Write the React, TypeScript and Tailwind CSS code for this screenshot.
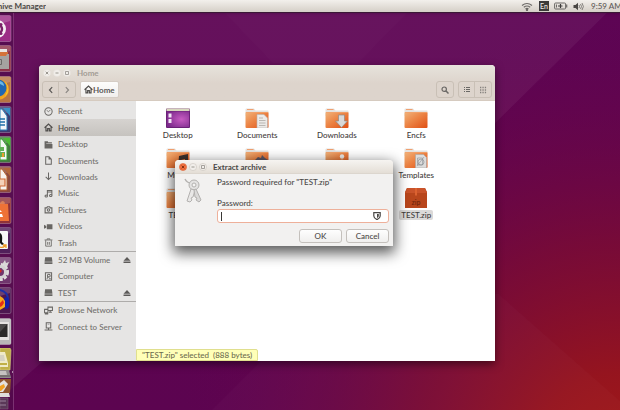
import type { ReactNode } from "react";

const Sym = ({ children }: { children: ReactNode }) => (
  <svg viewBox="0 0 16 16" className="h-[9px] w-[9px] shrink-0" fill="none" stroke="#686663" strokeWidth="1.8">
    {children}
  </svg>
);

const icons = {
  recent: (
    <Sym>
      <circle cx="8" cy="8" r="6.5" />
      <path d="M4.5 5.5 8 8.5l3.5-3.5" strokeWidth="1.4" />
    </Sym>
  ),
  home: (
    <Sym>
      <path d="M1 8.500 8 2l7 6.500M3.500 7.500v6.500h3v-4h3v4h3V7.500" strokeWidth="2.100" stroke="#504e4c" />
    </Sym>
  ),
  folder: (
    <Sym>
      <path d="M1 2h6v2h7v2H4v1h11v8H1z" fill="#686663" stroke="none" />
    </Sym>
  ),
  document: (
    <Sym>
      <path d="M3 1.500h6l4 4v9H3zM9 1.500v4h4" />
    </Sym>
  ),
  download: (
    <Sym>
      <path d="M8 1v12M3 8.500 8 13.500l5-5" />
    </Sym>
  ),
  music: (
    <Sym>
      <path d="M6 12V2.500h8V11M6 5.500h8" />
      <ellipse cx="4" cy="12.500" rx="2.200" ry="1.800" />
      <ellipse cx="12" cy="11.500" rx="2.200" ry="1.800" />
    </Sym>
  ),
  camera: (
    <Sym>
      <path d="M2 5h3l1-2h4l1 2h3v9H2z" strokeWidth="2" />
      <circle cx="8" cy="9" r="2.200" />
    </Sym>
  ),
  video: (
    <Sym>
      <path d="M5 4h10v9H5zM0 5l4 2v3l-4 2z" fill="#686663" stroke="none" />
    </Sym>
  ),
  trash: (
    <Sym>
      <path d="M1 3.500h14M5.500 3V1.500h5V3M3 4v10.500h10V4M6.500 7v5M9.500 7v5" strokeWidth="1.500" />
    </Sym>
  ),
  drive: (
    <Sym>
      <path d="M2 2h12l1 8H1zM1 11h14v3H1z" fill="#686663" stroke="none" />
    </Sym>
  ),
  computer: (
    <Sym>
      <path d="M2.500 1.500h11v13h-11z" />
      <circle cx="8.500" cy="6.500" r="2.500" />
      <path d="M5 12l3-4M9 12h3" />
    </Sym>
  ),
  network: (
    <Sym>
      <path d="M7 2h8v6H7zM1 6h6v6H1zM11 8v3M4 12v2.500M1.500 14h6M9 11h5" />
    </Sym>
  ),
  server: (
    <Sym>
      <path d="M4 1.500h8v9H4zM8 10.500V14M1 14.200h14" />
      <path d="M6.500 4h3" strokeWidth="1" />
    </Sym>
  ),
};

type Place = { label: string; icon: keyof typeof icons; eject?: boolean };

const places: Place[] = [
  { label: "Recent", icon: "recent" },
  { label: "Home", icon: "home" },
  { label: "Desktop", icon: "folder" },
  { label: "Documents", icon: "document" },
  { label: "Downloads", icon: "download" },
  { label: "Music", icon: "music" },
  { label: "Pictures", icon: "camera" },
  { label: "Videos", icon: "video" },
  { label: "Trash", icon: "trash" },
];

const devices: Place[] = [
  { label: "52 MB Volume", icon: "drive", eject: true },
  { label: "Computer", icon: "computer" },
  { label: "TEST", icon: "drive", eject: true },
];

const network: Place[] = [
  { label: "Browse Network", icon: "network" },
  { label: "Connect to Server", icon: "server" },
];

const files = [
  "Desktop",
  "Documents",
  "Downloads",
  "Encfs",
  "Music",
  "Pictures",
  "Public",
  "Templates",
  "TEST",
  "Videos",
  "Examples",
  "TEST.zip",
];

const PlaceRow = ({ place }: { place: Place }) => {
  const active = place.label === "Home";
  return (
    <li
      className={
        active
          ? "flex items-center bg-linear-to-b from-[#d6d3d0] to-[#c6c3bf] pr-[5px] pl-[5px] text-[#4c4a48]"
          : "flex items-center pr-[5px] pl-[5px]"
      }
    >
      <a href="#" className="flex min-w-0 flex-1 items-center gap-[5px] whitespace-nowrap">
        {icons[place.icon]}
        {place.label}
      </a>
      {place.eject && (
        <button type="button" aria-label={"Eject " + place.label}>
          <svg viewBox="0 0 8 8" className="h-2 w-2" fill="#5c5a58">
            <path d="M4 1l3.500 3.700h-7zM.5 5.600h7V7h-7z" />
          </svg>
        </button>
      )}
    </li>
  );
};

const FileIcon = ({ name }: { name: string }) => {
  if (name === "Desktop") {
    return (
      <svg viewBox="0 0 24 20" className="h-5 w-6">
        <rect x="0" y="0.500" width="24" height="19.500" rx="1" fill="#6b2177" />
        <rect x="0.500" y="0.500" width="23" height="2.500" fill="#d8d8bd" />
        <rect x="1" y="3.500" width="22" height="15.500" fill="url(#desk)" />
        <path d="M2.500 5.500h3v4h-3zM2.500 11h3v4h-3z" fill="#f2e6f5" />
      </svg>
    );
  }
  if (name === "TEST.zip") {
    return (
      <svg viewBox="0 0 24 20" className="h-5 w-6">
        <path d="M3 0h18l2 4v16H1V4z" fill="#b8461c" />
        <path d="M3 0h18l2 5H1z" fill="#c9532a" />
        <path d="M11 0h2v8l-1-1-1 1z" fill="#dc6230" />
        <text x="12" y="17" textAnchor="middle" fontSize="7" fill="#6d240b">
          zip
        </text>
      </svg>
    );
  }
  return (
    <svg viewBox="0 0 24 20" className="h-5 w-6">
      <path d="M.5 1.500Q.5.500 1.500.500h7.500l1.500 2H23q.5 0 .5.600V8H.5z" fill="#e6e2de" />
      <path d="M2 1.500h6.500" stroke="#f0a070" strokeWidth="1" />
      <rect x="0.500" y="4" width="23" height="16" rx="1" fill="url(#folder)" />
      <path d="M1 4.500h22" stroke="#f3a26c" strokeWidth="0.800" />
      {name === "Documents" && (
        <>
          <path d="M12 6.500h7l3.500 3.500v10H12z" fill="#eceae8" stroke="#b9b4af" strokeWidth="0.600" />
          <path d="M14 10h4M14 12.500h6.500M14 15h6.500M14 17.500h6.500" stroke="#b5b1ad" strokeWidth="0.900" />
        </>
      )}
      {name === "Downloads" && (
        <path d="M13.500 7h6v6h3l-6 6.500-6-6.500h3z" fill="#d9d9d9" stroke="#8f8a86" strokeWidth="0.700" />
      )}
      {name === "Music" && <path d="M13 8l9-2v12h-3v-7l-4 1v8h-3z" fill="#3b302c" />}
      {name === "Pictures" && <path d="M10 12l3-3 3 1 1-3 3 3 3 2v8H10z" fill="#5d5663" />}
      {name === "Public" && (
        <>
          <circle cx="17" cy="8.500" r="2.200" fill="#eeebe8" />
          <path d="M13.500 19v-6q3.500-3 7 0v6z" fill="#d8d4d0" />
        </>
      )}
      {name === "Templates" && (
        <>
          <path d="M11.500 6.500h8l3 3v10.500h-11z" fill="#dcdcdc" stroke="#a9a6a3" strokeWidth="0.600" />
          <circle cx="17" cy="14" r="3" fill="none" stroke="#8c9096" strokeWidth="0.700" />
          <path d="M13 18l7-9M13.500 10h5v7h-5z" fill="none" stroke="#8c9096" strokeWidth="0.600" />
        </>
      )}
    </svg>
  );
};

// Launcher tiles run off the left edge, so each drawing is the right part of its icon.
const tiles: { name: string; back: string; art: ReactNode }[] = [
  {
    name: "Search",
    back: "#9c2d86",
    art: (
      <>
        <circle cx="-3" cy="14" r="9" fill="#f6eef4" />
        <circle cx="-2" cy="14" r="4" fill="none" stroke="#7b2069" strokeWidth="2.500" />
        <circle cx="1" cy="9.500" r="1.500" fill="#7b2069" />
        <circle cx="1" cy="18.500" r="1.500" fill="#7b2069" />
      </>
    ),
  },
  {
    name: "Files",
    back: "#8e3349",
    art: (
      <>
        <path d="M0 4h7v6H0z" fill="#e9e6e3" />
        <path d="M0 7h8v6H0z" fill="#d4733a" />
        <path d="M0 11h6l1-2h2v15H0z" fill="#a5a3a1" />
        <path d="M0 14.500h1.500v5H0" fill="none" stroke="#6c6a68" />
      </>
    ),
  },
  {
    name: "Firefox",
    back: "#b87443",
    art: (
      <>
        <circle cx="-1" cy="13.500" r="10" fill="#f0a01e" />
        <circle cx="-2" cy="12" r="8.500" fill="#1f67b2" />
        <path d="M5 5q5 8 0 15l-5 3q8-3 8-9t-3-9z" fill="#f7d32d" />
        <path d="M0 5q4 1 4 5l-4-2z" fill="#69b8e6" />
      </>
    ),
  },
  {
    name: "Writer",
    back: "#3e3c72",
    art: (
      <>
        <path d="M0 3h2l5 7v14H0z" fill="#f4f6f8" stroke="#2d7db5" strokeWidth="1" />
        <path d="M3 2h7v8z" fill="#3a8fc5" />
        <path d="M0 13h5M0 16h5M0 19h5" stroke="#1e6fa8" strokeWidth="1.600" />
      </>
    ),
  },
  {
    name: "Calc",
    back: "#467a42",
    art: (
      <>
        <path d="M0 3h2l5 7v14H0z" fill="#f4f8f4" stroke="#3aa335" strokeWidth="1" />
        <path d="M3 2h7v8z" fill="#4dbb35" />
        <path d="M0 11h4v4H0zM0 16h5v5H0z" fill="#62b057" />
        <path d="M2 17h2v4H2z" fill="#e8a02c" />
      </>
    ),
  },
  {
    name: "Impress",
    back: "#8b4a40",
    art: (
      <>
        <path d="M0 3h2l5 7v14H0z" fill="#f8f3ef" stroke="#b5642f" strokeWidth="1" />
        <path d="M3 2h7v8z" fill="#b3673a" />
        <path d="M0 13h5v7H0" fill="#f4d2b8" stroke="#cf6a34" strokeWidth="1.200" />
      </>
    ),
  },
  {
    name: "Software",
    back: "#8f3238",
    art: (
      <>
        <path d="M0 6q3-4 5 0l-1 2H0z" fill="#d9805a" />
        <path d="M0 7h8l1 17H0z" fill="#ee7237" />
        <path d="M0 17h2l1 3H0zM0 13l2 2H0z" fill="#fff" />
      </>
    ),
  },
  {
    name: "Amazon",
    back: "#51205b",
    art: (
      <>
        <path d="M0 4h7q1 0 1 1v16q0 1-1 1H0z" fill="#f7f7f7" />
        <path d="M0 6q3 1 2 9l2 2-2 1-2-2z" fill="#111" />
        <path d="M0 20q3 1 5-1l-2-1h3v3" fill="none" stroke="#f09a26" strokeWidth="1.300" />
      </>
    ),
  },
  {
    name: "Settings",
    back: "#70366d",
    art: (
      <>
        <path d="M1 9l4-6 1 3 3-1-2 5-4 3z" fill="#d9d8d7" />
        <circle cx="0" cy="15" r="7" fill="none" stroke="#dedddc" strokeWidth="4" strokeDasharray="3 1.200" />
        <circle cx="0" cy="15" r="5.500" fill="none" stroke="#d4d3d2" strokeWidth="3" />
        <path d="M0 12l2 2-2 2z" fill="#d12a24" />
      </>
    ),
  },
  {
    name: "Audacity",
    back: "#4d1650",
    art: (
      <>
        <path d="M0 3q9 2 8 12" fill="none" stroke="#1c2fa8" strokeWidth="1.800" />
        <ellipse cx="6.500" cy="16" rx="3" ry="6" fill="#1420a8" />
        <path d="M0 9l3 2 2 3v6l-5 3z" fill="#f6a91d" />
        <path d="M0 16l3-3 1 3-2 3-2 1z" fill="#e22d17" />
      </>
    ),
  },
  {
    name: "Terminal",
    back: "#b9b7b8",
    art: (
      <>
        <path d="M0 4h9v18H0z" fill="#e5e3e1" />
        <path d="M0 6h7.500v13H0z" fill="#2b2a29" />
        <path d="M0 6h7.500L0 14z" fill="#4a4948" />
      </>
    ),
  },
];

const WindowButtons = ({ live }: { live?: boolean }) => (
  <div className="flex gap-[2px]">
    {["Close", "Minimize", "Maximize"].map((label) => (
      <button key={label} type="button" aria-label={label}>
        <svg viewBox="0 0 8 8" className="h-2 w-2" fill="none" stroke={live && label === "Close" ? "#7a2a10" : "#918c86"}>
          <circle
            cx="4"
            cy="4"
            r="3.600"
            fill={live && label === "Close" ? "#f0703f" : "#f1eeea"}
            stroke={live ? (label === "Close" ? "#d65a2c" : "#c4beb7") : "#e4dfd9"}
            strokeWidth="0.500"
          />
          {label === "Close" && <path d="M2.700 2.700l2.600 2.600M5.300 2.700 2.700 5.300" strokeWidth="0.900" />}
          {label === "Minimize" && <path d="M2.500 4h3" strokeWidth="0.900" />}
          {label === "Maximize" && <path d="M2.500 2.500h3v3h-3z" strokeWidth="0.800" />}
        </svg>
      </button>
    ))}
  </div>
);

const Wallpaper = () => (
  <svg viewBox="0 0 620 410" preserveAspectRatio="none" className="absolute inset-0 h-full w-full">
    <defs>
      <linearGradient id="wall" x1="0" y1="0" x2="0" y2="1">
        <stop offset="0" stopColor="#5d0554" />
        <stop offset="0.450" stopColor="#5d0352" />
        <stop offset="1" stopColor="#5c0450" />
      </linearGradient>
      <radialGradient id="glow" gradientUnits="userSpaceOnUse" cx="620" cy="460" r="440">
        <stop offset="0" stopColor="#a51a16" />
        <stop offset="0.200" stopColor="#98151c" stopOpacity="0.950" />
        <stop offset="0.500" stopColor="#7d0c32" stopOpacity="0.800" />
        <stop offset="1" stopColor="#62044e" stopOpacity="0" />
      </radialGradient>
      <linearGradient id="folder" x1="0" y1="0" x2="1" y2="1">
        <stop offset="0" stopColor="#f0b47c" />
        <stop offset="0.450" stopColor="#ec8546" />
        <stop offset="1" stopColor="#e04f14" />
      </linearGradient>
      <radialGradient id="desk" cx="0.650" cy="0.500" r="0.700">
        <stop offset="0" stopColor="#c75cc2" />
        <stop offset="1" stopColor="#7c2a8c" />
      </radialGradient>
    </defs>
    <rect width="620" height="410" fill="url(#wall)" />
    <rect width="620" height="410" fill="url(#glow)" />
    <path d="M0 0h620L496 122 300 330 41 362 0 398z" fill="#fff" fillOpacity="0.050" />
    <path d="M212 0l61 63h85L420 0z" fill="#fff" fillOpacity="0.015" />
    <path d="M211 410l100-100 187-17 122 107v10z" fill="#fff" fillOpacity="0.020" />
  </svg>
);

const Panel = () => (
  <header className="relative flex h-[13px] items-center border-b border-[#3b1836] bg-linear-to-b from-[#f3f0ec] to-[#d5cfc7] text-[#4a4744] shadow-sm">
    <div className="flex w-[46px] justify-end overflow-hidden whitespace-nowrap">
      <h1 className="font-bold">Archive Manager</h1>
    </div>
    <div className="ml-auto flex items-center">
      <svg viewBox="0 0 12 9" className="h-[9px] w-3" fill="none" stroke="#6c6966" strokeWidth="1.100">
        <path d="M1 3.500q5-4 10 0M2.800 5.300q3.200-2.600 6.400 0M4.500 7q1.500-1.200 3 0" />
        <circle cx="6" cy="8" r="0.600" fill="#6c6966" />
      </svg>
      <span className="ml-[6px] w-[10px] bg-[#3c3b39] text-center text-[7px] leading-[10px] text-[#efece8]">En</span>
      <svg viewBox="0 0 14 8" className="ml-[5px] h-2 w-[14px]" fill="none" stroke="#6c6966">
        <rect x="0.600" y="1" width="11" height="6" rx="1" />
        <path d="M12.700 2.500v3" strokeWidth="1.200" />
        <path d="M2.500 2.500v3" />
        <path d="M4 4h4.500M6.500 2v4" stroke="#3c3b39" strokeWidth="1.200" />
      </svg>
      <svg viewBox="0 0 11 9" className="ml-[5px] h-[9px] w-[11px]" fill="none" stroke="#6c6966">
        <path d="M.5 3h2L5 .8v7.400L2.500 6h-2z" fill="#4a4744" stroke="none" />
        <path d="M6 3q1 1.500 0 3M7.500 2q2 2.500 0 5M9 1q2.800 3.500 0 7" strokeWidth="0.800" />
      </svg>
      <time className="ml-[7px] w-[29px] whitespace-nowrap text-[#5f5c59]">9:59 AM</time>
    </div>
  </header>
);

const Launcher = () => (
  <nav className="relative w-[14px] overflow-hidden border-r border-[#7b3272] bg-[#4f0c49]/60 pt-[2px]">
    <ul className="grid h-[333px] auto-rows-fr">
      {tiles.map((tile) => (
        <li key={tile.name}>
          <button type="button" aria-label={tile.name} className="block">
            <svg viewBox="0 0 12 27" className="h-[27px] w-3">
              <path d="M0 .5h9.500q1.500 0 1.500 1.500v23q0 1.500-1.500 1.500H0" fill={tile.back} stroke="#fff" strokeOpacity="0.250" />
              <path d="M0 1h10v5L0 9z" fill="#fff" fillOpacity="0.180" />
              {tile.art}
            </svg>
          </button>
        </li>
      ))}
    </ul>
    <svg viewBox="0 0 14 63" className="h-[63px] w-[14px]">
      <path d="M0 0h10l1 2-1 20H0z" fill="#c0b04a" stroke="#d8cf87" strokeWidth="0.600" />
      <path d="M0 4h5l3 11v4H0z" fill="#efeac8" />
      <path d="M0 7h4l1 6H0z" fill="#d6d2c2" />
      <path d="M0 16h7" stroke="#b29c1c" strokeWidth="1.500" />
      <path d="M0 22h9l2 8H0z" fill="#8f8b8a" />
      <path d="M0 23h6l1 4H0z" fill="#c6c3c1" />
      <path d="M0 28h10" stroke="#5f5a59" />
      <path d="M0 31h11l-1 14H0z" fill="#8d5530" />
      <path d="M0 35l4-3 4 4-5 8H0z" fill="#e4e1dd" />
      <path d="M0 38l4-2 1 3-4 4H0z" fill="#f0a122" />
      <path d="M0 45h9l1 4H0z" fill="#dedcda" />
      <path d="M0 50h8v11H0z" fill="#5a3858" stroke="#7c6079" strokeWidth="0.600" />
      <path d="M0 53h6M0 57h6" stroke="#98809a" />
      <path d="M14 22v4l-2-2z" fill="#fff" />
    </svg>
  </nav>
);

const toolButton = "flex items-center justify-center";

const FileManager = () => (
  <section
    aria-label="Home"
    className="absolute top-[65px] right-[125px] left-[39px] flex h-[296px] flex-col overflow-hidden rounded-t-[4px] bg-white shadow-[0_3px_9px_rgba(0,0,0,0.5)]"
  >
    <header className="flex flex-col bg-linear-to-b from-[#e6e3dc] to-[#ddd4cc] to-50%">
      <div className="flex h-[15px] items-center gap-[6px] pl-1">
        <WindowButtons />
        <h2 className="font-bold text-[#a29c95]">Home</h2>
      </div>
      <div className="flex h-[21px] items-stretch border-b border-[#d6cbc0] px-[3px] pt-px pb-[2px]">
        <div className="flex divide-x divide-[#c9c0b6] rounded-[3px] border border-[#c9c0b6]">
          <button type="button" aria-label="Back" className={toolButton + " w-4"}>
            <svg viewBox="0 0 8 8" className="h-2 w-2" fill="none" stroke="#5a5856" strokeWidth="1.200">
              <path d="M5.200 1.200 2.500 4l2.700 2.800" />
            </svg>
          </button>
          <button type="button" aria-label="Forward" className={toolButton + " w-4"}>
            <svg viewBox="0 0 8 8" className="h-2 w-2" fill="none" stroke="#8b8783" strokeWidth="1.200">
              <path d="M2.800 1.200 5.500 4 2.800 6.800" />
            </svg>
          </button>
        </div>
        <button
          type="button"
          className={toolButton + " ml-[4px] rounded-[2px] border border-[#d5cdc5] bg-linear-to-b from-[#fdfdfc] to-[#f1efed] px-[3px] font-bold text-[#5a5856]"}
        >
          {icons.home}
          Home
        </button>
        <button type="button" aria-label="Search" className={toolButton + " ml-auto w-[18px] rounded-[3px] border border-[#c9c0b6]"}>
          <svg viewBox="0 0 8 8" className="h-2 w-2" fill="none" stroke="#6a6865" strokeWidth="1.200">
            <circle cx="3.200" cy="3.200" r="2.200" />
            <path d="M4.800 4.800 7.500 7.500" strokeWidth="1.500" />
          </svg>
        </button>
        <div className="ml-[4px] flex divide-x divide-[#c9c0b6] rounded-[3px] border border-[#c9c0b6]">
          <button type="button" aria-label="List view" className={toolButton + " w-4"}>
            <svg viewBox="0 0 8 8" className="h-2 w-2" stroke="#6a6865">
              <path d="M1 1.500h1M1 3.500h1M1 5.500h1M3 1.500h4M3 3.500h4M3 5.500h4" />
            </svg>
          </button>
          <button type="button" aria-label="Icon view" className={toolButton + " w-4"}>
            <svg viewBox="0 0 8 8" className="h-2 w-2" stroke="#85817d" strokeWidth="1.300">
              <path d="M1 1.500h1.300M3.400 1.500h1.300M5.800 1.500h1.300M1 4h1.300M3.400 4h1.300M5.800 4h1.300M1 6.500h1.300M3.400 6.500h1.300M5.800 6.500h1.300" />
            </svg>
          </button>
        </div>
      </div>
    </header>
    <div className="flex min-h-0 flex-1">
      <nav className="w-[97px] shrink-0 bg-[#e6e5e4] pt-[2px] text-[#73716e]">
        <ul className="grid h-[148px] auto-rows-fr">
          {places.map((place) => (
            <PlaceRow key={place.label} place={place} />
          ))}
        </ul>
        <ul className="grid h-[51px] auto-rows-fr border-y border-[#aeacaa]">
          {devices.map((place) => (
            <PlaceRow key={place.label} place={place} />
          ))}
        </ul>
        <ul className="grid h-[33px] auto-rows-fr">
          {network.map((place) => (
            <PlaceRow key={place.label} place={place} />
          ))}
        </ul>
      </nav>
      <main className="flex min-w-0 flex-1 flex-col justify-between">
        <ul className="grid grid-cols-[repeat(auto-fill,minmax(79px,1fr))] gap-y-2 pt-[7px] pr-[39px] pl-[2px] text-[#3f3d3b]">
          {files.map((name) => (
            <li key={name} className="flex flex-col items-center gap-[2px] leading-[10px]">
              <FileIcon name={name} />
              <span className={name === "TEST.zip" ? "rounded-[2px] bg-[#dbd9d8] px-[2px]" : "px-[2px]"}>{name}</span>
            </li>
          ))}
        </ul>
        <p className="self-start rounded-tr-[2px] border border-[#e0df8e] bg-[#ffffb8] px-[5px] leading-[10px] whitespace-pre text-[#6d6b4e]">
          "TEST.zip" selected  (888 bytes)
        </p>
      </main>
    </div>
  </section>
);

const dialogButton =
  "h-[14px] w-[43px] rounded-[3px] border border-[#c4c0bc] bg-linear-to-b from-[#fefefe] to-[#f0efee] text-[#4a4846]";

const ExtractDialog = () => (
  <form
    role="dialog"
    aria-label="Extract archive"
    className="absolute top-[160px] left-[175px] w-[218px] rounded-t-[4px] bg-[#f2f1f0] text-[#4a4846] shadow-[0_5px_14px_2px_rgba(0,0,0,0.65)]"
    onSubmit={(e) => e.preventDefault()}
  >
    <header className="flex h-[14px] items-center gap-[6px] rounded-t-[4px] border-b border-[#dcd6ce] bg-linear-to-b from-[#f6f4f1] to-[#e4ded6] pl-[4px]">
      <WindowButtons live />
      <h2 className="font-bold">Extract archive</h2>
    </header>
    <div className="flex gap-[13px] px-1 pt-[3px] pb-[3px] pl-[9px]">
      <svg viewBox="0 0 20 27" className="h-[27px] w-5 shrink-0" fill="none" stroke="#b3b1af" strokeWidth="1">
        <path d="M1 2q2 4 6 4" strokeWidth="1.400" />
        <circle cx="10" cy="8" r="5" fill="#e4e3e2" />
        <circle cx="10" cy="8" r="2" fill="#f5f4f3" />
        <path d="M7 12l-4 12 3 1 2-2-1-2 2-1 2-7z" fill="#e9e8e7" />
        <path d="M12 12l5 11-2 2-3-2 1-2-2-1-1-7z" fill="#dad9d8" />
      </svg>
      <div className="flex min-w-0 flex-1 flex-col">
        <p className="leading-[11px]">Password required for "TEST.zip"</p>
        <label htmlFor="password" className="mt-[10px] leading-[11px]">
          Password:
        </label>
        <div className="flex h-[14px] items-center rounded-[3px] border border-[#eeb09a] bg-white pr-[7px] pl-[3px]">
          <span className="h-[9px] w-px bg-[#3a3836]" />
          <input id="password" type="password" className="min-w-0 flex-1 bg-transparent outline-none" />
          <svg viewBox="0 0 8 8" className="h-2 w-2">
            <path d="M.8.700h6.400v3.300Q7 6.500 4 7.600 1 6.500.8 4z" fill="#fff" stroke="#4a4846" strokeWidth="1.200" />
            <path d="M4 2h1.800v2Q5.600 5.300 4 6z" fill="#4a4846" />
          </svg>
        </div>
        <div className="mt-[6px] flex justify-end gap-1">
          <button type="submit" className={dialogButton}>
            OK
          </button>
          <button type="button" className={dialogButton}>
            Cancel
          </button>
        </div>
      </div>
    </div>
  </form>
);

export default function App() {
  return (
    <div className="relative flex min-h-screen flex-col overflow-hidden bg-[#5f0652] font-['Lato','Noto_Sans',sans-serif] text-[8px] leading-3 font-medium">
      <Wallpaper />
      <Panel />
      <div className="flex flex-1">
        <Launcher />
      </div>
      <FileManager />
      <ExtractDialog />
    </div>
  );
}
